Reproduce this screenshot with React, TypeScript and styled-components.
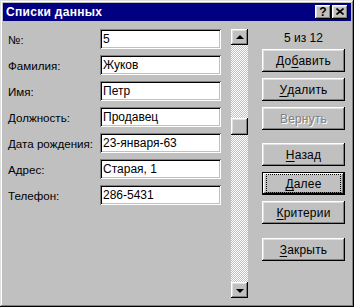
import React from 'react';
import styled, { createGlobalStyle, css } from 'styled-components';

const Global = createGlobalStyle`
  html, body { margin: 0; padding: 0; background: #c0c0c0; }
  body { font-family: "Liberation Sans", Arial, sans-serif; font-size: 12px; color: #000; }
  * { box-sizing: border-box; }
`;

const raised = css`
  box-shadow: inset -1px -1px #000, inset 1px 1px #fff, inset -2px -2px #808080, inset 2px 2px #dfdfdf;
`;

const Window = styled.div`
  width: 354px;
  height: 307px;
  padding: 3px;
  background: #c0c0c0;
  box-shadow: inset -1px -1px #000, inset 1px 1px #dfdfdf, inset -2px -2px #808080, inset 2px 2px #fff;
  display: flex;
  flex-direction: column;
`;

const TitleBar = styled.div`
  height: 18px;
  background: #000080;
  display: flex;
  align-items: center;
  padding: 0 3px 0 3px;
`;

const Title = styled.div`
  flex: 1;
  color: #fff;
  font-weight: bold;
  font-size: 12px;
  letter-spacing: 0.3px;
`;

const TitleButtons = styled.div`
  display: flex;
  gap: 1px;
`;

const TitleButton = styled.div`
  width: 16px;
  height: 14px;
  background: #c0c0c0;
  ${raised};
  display: flex;
  align-items: center;
  justify-content: center;
  font-weight: bold;
  font-size: 12px;
  line-height: 14px;
  padding-bottom: 1px;
`;

const Body = styled.div`
  flex: 1;
  display: flex;
  align-items: flex-start;
  padding: 8px 6px 6px 5px;
`;

const Form = styled.div`
  display: grid;
  grid-template-columns: 92px 121px;
  grid-auto-rows: 20px;
  row-gap: 6px;
`;

const Label = styled.div`
  display: flex;
  align-items: center;
  white-space: nowrap;
  font-size: 11.6px;
`;

const Field = styled.div`
  height: 20px;
  background: #fff;
  display: flex;
  align-items: center;
  padding: 0 3px;
  box-shadow: inset 1px 1px #808080, inset -1px -1px #fff, inset 2px 2px #000, inset -2px -2px #c0c0c0;
  white-space: nowrap;
  overflow: hidden;
`;

const ScrollBar = styled.div`
  width: 17px;
  height: 269px;
  margin-left: 10px;
  display: flex;
  flex-direction: column;
`;

const ScrollButton = styled.div`
  width: 17px;
  height: 16px;
  background: #c0c0c0;
  ${raised};
  display: flex;
  align-items: center;
  justify-content: center;
`;

const Arrow = styled.div<{ $dir: 'up' | 'down' }>`
  width: 0;
  height: 0;
  border-left: 4px solid transparent;
  border-right: 4px solid transparent;
  ${(p) =>
    p.$dir === 'up'
      ? css`border-bottom: 4px solid #000; margin-top: -1px;`
      : css`border-top: 4px solid #000; margin-top: 1px;`}
`;

const Track = styled.div`
  flex: 1;
  position: relative;
  background: repeating-conic-gradient(#c0c0c0 0% 25%, #fff 0% 50%) 0 0 / 2px 2px;
`;

const Thumb = styled.div`
  position: absolute;
  left: 0;
  width: 17px;
  height: 17px;
  background: #c0c0c0;
  ${raised};
`;

const Side = styled.div`
  width: 83px;
  margin-left: 14px;
  display: flex;
  flex-direction: column;
`;

const Counter = styled.div`
  height: 20px;
  line-height: 16px;
  text-align: center;
  padding-top: 1px;
`;

const Button = styled.div<{ $default?: boolean; $disabled?: boolean; $space?: number }>`
  height: 23px;
  width: 83px;
  margin-top: ${(p) => p.$space ?? 0}px;
  background: #c0c0c0;
  display: flex;
  align-items: center;
  justify-content: center;
  letter-spacing: 0.2px;
  ${(p) =>
    p.$default
      ? css`box-shadow: inset 0 0 0 1px #000, inset -2px -2px #000, inset 2px 2px #fff, inset -3px -3px #808080, inset 3px 3px #dfdfdf;`
      : raised};
  ${(p) =>
    p.$disabled &&
    css`
      color: #808080;
      text-shadow: 1px 1px #fff;
    `}
  u { text-decoration-thickness: 1px; text-underline-offset: 2px; }
`;

const Focus = styled.span`
  outline: 1px dotted #000;
  outline-offset: 0;
  padding: 2px 14px 1px;
  width: 73px;
  text-align: center;
`;

const fields: [string, string][] = [
  ['№:', '5'],
  ['Фамилия:', 'Жуков'],
  ['Имя:', 'Петр'],
  ['Должность:', 'Продавец'],
  ['Дата рождения:', '23-января-63'],
  ['Адрес:', 'Старая, 1'],
  ['Телефон:', '286-5431'],
];

const record = 5;
const total = 12;
const trackRange = 237 - 17;

export default function App() {
  return (
    <>
      <Global />
      <Window>
        <TitleBar>
          <Title>Списки данных</Title>
          <TitleButtons>
            <TitleButton>?</TitleButton>
            <TitleButton>
              <svg width="8" height="7" viewBox="0 0 8 7">
                <path d="M0.5 0.5 L7.5 6.5 M7.5 0.5 L0.5 6.5" stroke="#000" strokeWidth="1.6" />
              </svg>
            </TitleButton>
          </TitleButtons>
        </TitleBar>
        <Body>
          <Form>
            {fields.map(([l, v]) => (
              <React.Fragment key={l}>
                <Label>{l}</Label>
                <Field>{v}</Field>
              </React.Fragment>
            ))}
          </Form>
          <ScrollBar>
            <ScrollButton>
              <Arrow $dir="up" />
            </ScrollButton>
            <Track>
              <Thumb style={{ top: Math.round(((record - 1) / total) * trackRange) }} />
            </Track>
            <ScrollButton>
              <Arrow $dir="down" />
            </ScrollButton>
          </ScrollBar>
          <Side>
            <Counter>{record} из {total}</Counter>
            <Button>
              До<u>б</u>авить
            </Button>
            <Button $space={6}>
              <u>У</u>далить
            </Button>
            <Button $space={6} $disabled>
              Вернуть
            </Button>
            <Button $space={13}>
              <u>Н</u>азад
            </Button>
            <Button $space={6} $default>
              <Focus>
                <u>Д</u>алее
              </Focus>
            </Button>
            <Button $space={6}>
              <u>К</u>ритерии
            </Button>
            <Button $space={14}>
              <u>З</u>акрыть
            </Button>
          </Side>
        </Body>
      </Window>
    </>
  );
}
